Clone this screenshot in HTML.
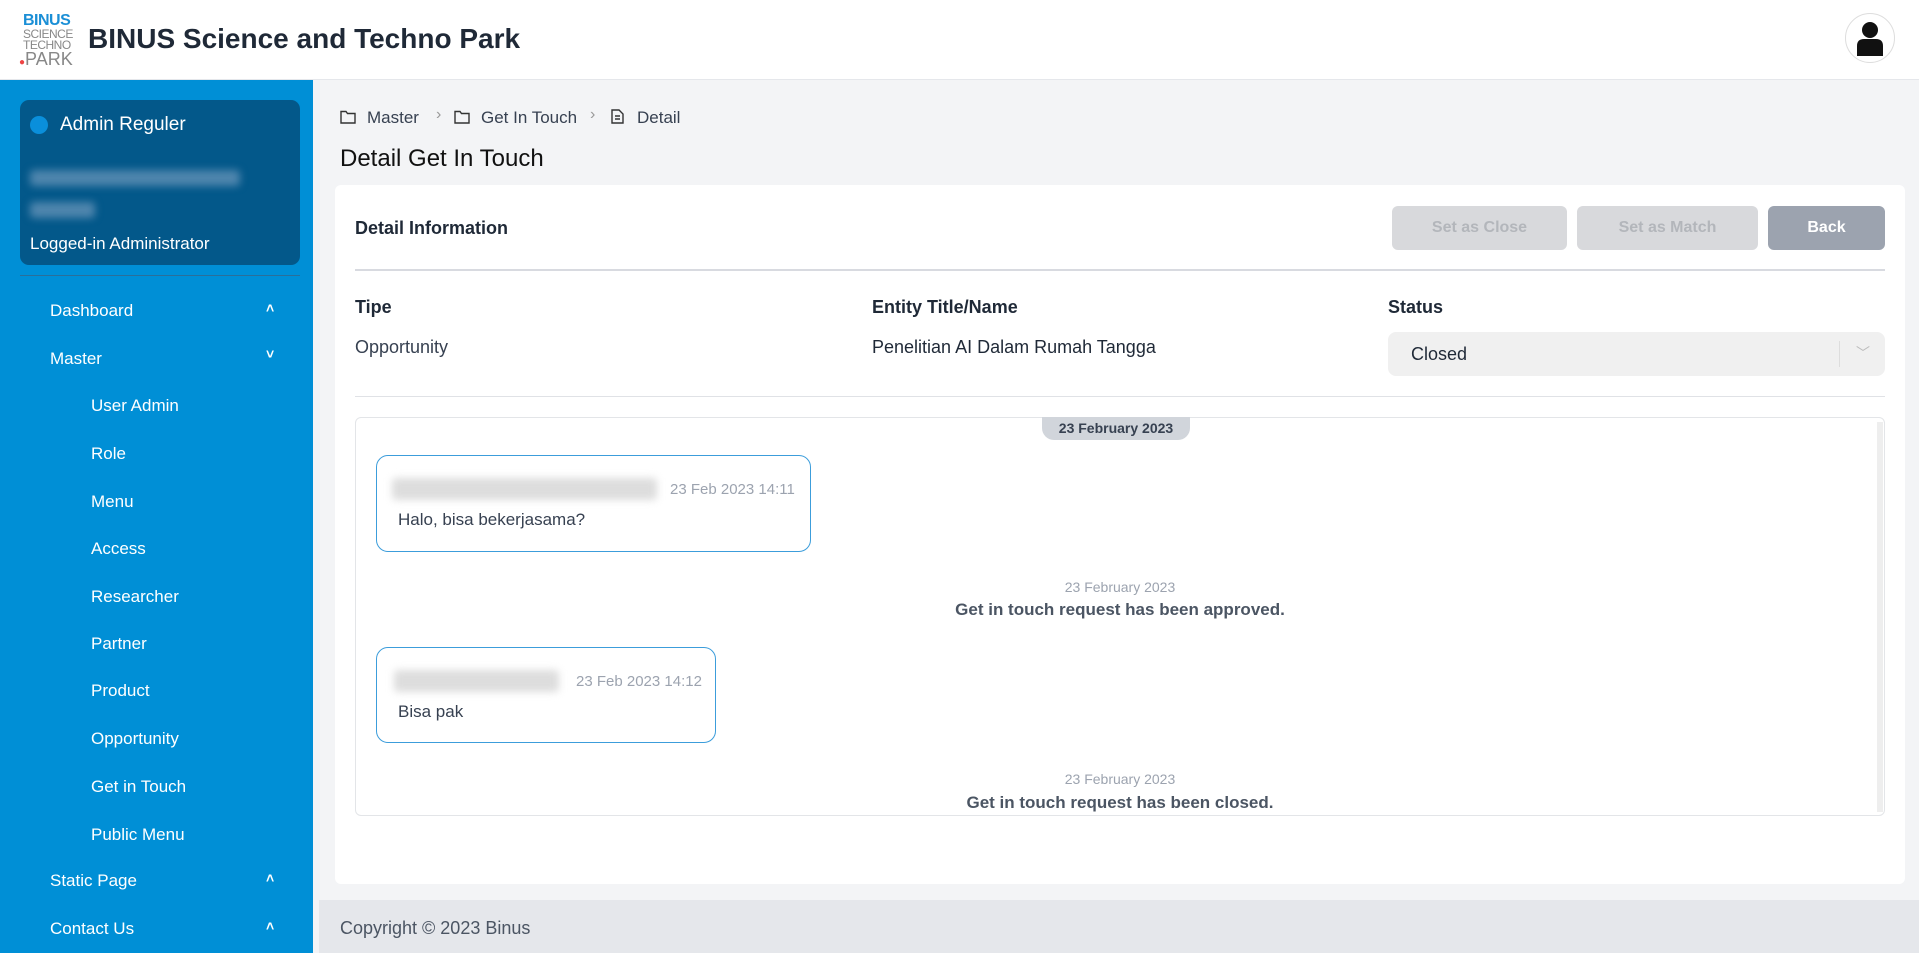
<!DOCTYPE html>
<html><head><meta charset="utf-8"><style>
*{box-sizing:border-box;margin:0;padding:0}
body{width:1919px;height:953px;overflow:hidden;font-family:"Liberation Sans",sans-serif;background:#f3f4f6;position:relative;color:#1f2937}
.a{position:absolute;white-space:nowrap}
.hdr{left:0;top:0;width:1919px;height:80px;background:#fff;border-bottom:1px solid #e5e7eb}
.side{left:0;top:80px;width:313px;height:873px;background:#008fd6}
.nav{color:#fff;font-size:17px}
.chev{color:#fff;font-size:14px;font-weight:bold}
.btn{height:44px;border-radius:6px;font-size:16px;font-weight:bold;display:flex;align-items:center;justify-content:center}
.blur{background:#d9d9d9;filter:blur(4px);border-radius:4px}
</style></head><body>
<div class="a hdr"></div>
<div class="a" style="left:23px;top:14px;line-height:14px;font-weight:bold;font-size:16px;color:#1b8fd6;letter-spacing:-0.5px">BINUS</div>
<div class="a" style="left:23px;top:29px;line-height:11px;font-size:12px;color:#888;letter-spacing:-0.5px">SCIENCE<br>TECHNO</div>
<div class="a" style="left:19px;top:51px;font-size:18px;line-height:16px;color:#888"><span style="color:#e44;font-size:10px">●</span>PARK</div>
<div class="a" style="left:88px;top:23px;font-size:28px;font-weight:bold;color:#1f2937">BINUS Science and Techno Park</div>
<div class="a" style="left:1845px;top:13px;width:50px;height:50px;border-radius:50%;border:1px solid #ddd;background:#fff"></div>
<svg class="a" style="left:1856px;top:20px" width="28" height="38" viewBox="0 0 28 38"><circle cx="14" cy="10" r="8" fill="#111"/><path d="M1 36 V26 Q1 19 8 19 H20 Q27 19 27 26 V36 Z" fill="#111"/></svg>

<div class="a side"></div>
<div class="a" style="left:20px;top:100px;width:280px;height:165px;background:#03588a;border-radius:9px"></div>
<div class="a" style="left:30px;top:116px;width:18px;height:18px;border-radius:50%;background:#0a8fdb"></div>
<div class="a" style="left:60px;top:114px;font-size:19px;color:#fff">Admin Reguler</div>
<div class="a blur" style="left:30px;top:170px;width:210px;height:16px;background:#4e85ad"></div>
<div class="a blur" style="left:30px;top:202px;width:65px;height:16px;background:#4e85ad"></div>
<div class="a" style="left:30px;top:234px;font-size:17px;color:#fff">Logged-in Administrator</div>
<div class="a" style="left:20px;top:275px;width:280px;height:1px;background:#2a6f9a"></div>
<div class="a nav" style="left:50px;top:301px">Dashboard</div><div class="a chev" style="left:266px;top:300px">˄</div>
<div class="a nav" style="left:50px;top:349px">Master</div><div class="a chev" style="left:266px;top:346px">˅</div>
<div class="a nav" style="left:91px;top:396px">User Admin</div>
<div class="a nav" style="left:91px;top:444px">Role</div>
<div class="a nav" style="left:91px;top:492px">Menu</div>
<div class="a nav" style="left:91px;top:539px">Access</div>
<div class="a nav" style="left:91px;top:587px">Researcher</div>
<div class="a nav" style="left:91px;top:634px">Partner</div>
<div class="a nav" style="left:91px;top:681px">Product</div>
<div class="a nav" style="left:91px;top:729px">Opportunity</div>
<div class="a nav" style="left:91px;top:777px">Get in Touch</div>
<div class="a nav" style="left:91px;top:825px">Public Menu</div>
<div class="a nav" style="left:50px;top:871px">Static Page</div><div class="a chev" style="left:266px;top:870px">˄</div>
<div class="a nav" style="left:50px;top:919px">Contact Us</div><div class="a chev" style="left:266px;top:918px">˄</div>

<svg class="a" style="left:340px;top:110px" width="16" height="14" viewBox="0 0 16 14"><path d="M1 1.5H6L7.5 3.5H15V13H1Z" fill="none" stroke="#333" stroke-width="1.4"/></svg>
<div class="a" style="left:367px;top:108px;font-size:17px;color:#374151">Master</div>
<div class="a" style="left:436px;top:106px;font-size:16px;color:#999">›</div>
<svg class="a" style="left:454px;top:110px" width="16" height="14" viewBox="0 0 16 14"><path d="M1 1.5H6L7.5 3.5H15V13H1Z" fill="none" stroke="#333" stroke-width="1.4"/></svg>
<div class="a" style="left:481px;top:108px;font-size:17px;color:#374151">Get In Touch</div>
<div class="a" style="left:590px;top:106px;font-size:16px;color:#999">›</div>
<svg class="a" style="left:611px;top:109px" width="13" height="15" viewBox="0 0 13 15"><path d="M1 1H8L12 5V14H1Z M4 7H9M4 10H9" fill="none" stroke="#333" stroke-width="1.4"/></svg>
<div class="a" style="left:637px;top:108px;font-size:17px;color:#374151">Detail</div>
<div class="a" style="left:340px;top:145px;font-size:24px;color:#111">Detail Get In Touch</div>

<div class="a" style="left:335px;top:185px;width:1570px;height:699px;background:#fff;border-radius:6px"></div>
<div class="a" style="left:355px;top:218px;font-size:18px;font-weight:bold;color:#1f2937">Detail Information</div>
<div class="a btn" style="left:1392px;top:206px;width:175px;background:#d8d9dc;color:#b3b6bb">Set as Close</div>
<div class="a btn" style="left:1577px;top:206px;width:181px;background:#d8d9dc;color:#b3b6bb">Set as Match</div>
<div class="a btn" style="left:1768px;top:206px;width:117px;background:#9ca3af;color:#fff">Back</div>
<div class="a" style="left:355px;top:269px;width:1530px;height:2px;background:#d8dae0"></div>
<div class="a" style="left:355px;top:297px;font-size:18px;font-weight:bold">Tipe</div>
<div class="a" style="left:872px;top:297px;font-size:18px;font-weight:bold">Entity Title/Name</div>
<div class="a" style="left:1388px;top:297px;font-size:18px;font-weight:bold">Status</div>
<div class="a" style="left:355px;top:337px;font-size:18px;color:#374151">Opportunity</div>
<div class="a" style="left:872px;top:337px;font-size:18px;color:#1f2937">Penelitian AI Dalam Rumah Tangga</div>
<div class="a" style="left:1388px;top:332px;width:497px;height:44px;background:#f0f0f0;border-radius:8px"></div>
<div class="a" style="left:1411px;top:344px;font-size:18px;color:#1f2937">Closed</div>
<div class="a" style="left:1839px;top:341px;width:1px;height:26px;background:#ddd"></div>
<div class="a" style="left:1856px;top:343px;font-size:14px;color:#bbb">﹀</div>
<div class="a" style="left:355px;top:396px;width:1530px;height:1px;background:#e0e2e6"></div>

<div class="a" style="left:355px;top:417px;width:1530px;height:399px;border:1px solid #e3e5e8;border-radius:6px"></div>
<div class="a" style="left:1877px;top:422px;width:6px;height:390px;background:#eee"></div>
<div class="a" style="left:1042px;top:417px;width:148px;height:23px;background:#d1d5db;border-radius:0 0 12px 12px;font-size:14px;font-weight:bold;text-align:center;line-height:22px;color:#374151">23 February 2023</div>
<div class="a" style="left:376px;top:455px;width:435px;height:97px;border:1px solid #3c9ddb;border-radius:12px"></div>
<div class="a blur" style="left:392px;top:478px;width:265px;height:22px;background:#ddd"></div>
<div class="a" style="left:670px;top:481px;font-size:15px;color:#9ca3af">23 Feb 2023 14:11</div>
<div class="a" style="left:398px;top:510px;font-size:17px;color:#374151">Halo, bisa bekerjasama?</div>
<div class="a" style="left:355px;top:579px;width:1530px;text-align:center;font-size:14px;color:#9ca3af">23 February 2023</div>
<div class="a" style="left:355px;top:600px;width:1530px;text-align:center;font-size:17px;font-weight:bold;color:#4b5563">Get in touch request has been approved.</div>
<div class="a" style="left:376px;top:647px;width:340px;height:96px;border:1px solid #3c9ddb;border-radius:12px"></div>
<div class="a blur" style="left:394px;top:670px;width:165px;height:22px;background:#ddd"></div>
<div class="a" style="left:576px;top:673px;font-size:15px;color:#9ca3af">23 Feb 2023 14:12</div>
<div class="a" style="left:398px;top:702px;font-size:17px;color:#374151">Bisa pak</div>
<div class="a" style="left:355px;top:771px;width:1530px;text-align:center;font-size:14px;color:#9ca3af">23 February 2023</div>
<div class="a" style="left:355px;top:793px;width:1530px;text-align:center;font-size:17px;font-weight:bold;color:#4b5563">Get in touch request has been closed.</div>

<div class="a" style="left:319px;top:900px;width:1600px;height:53px;background:#e5e7eb"></div>
<div class="a" style="left:340px;top:918px;font-size:18px;color:#4b5563">Copyright © 2023 Binus</div>
</body></html>
